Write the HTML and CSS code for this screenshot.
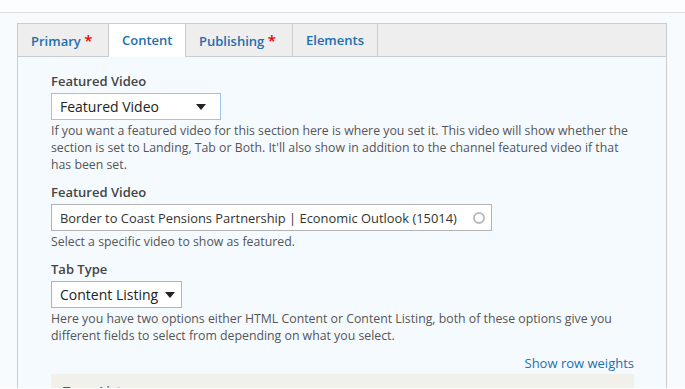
FILE: index.html
```html
<!DOCTYPE html>
<html lang="en">
<head>
  <meta charset="UTF-8" />
  <meta name="viewport" content="width=device-width, initial-scale=1.0"/>
  <title>Edit section</title>
  <link rel="stylesheet" href="styles.css">
</head>
<body>

<div class="page">
  <div class="vtabs">
    <ul class="tabs">
      <li class="tab tab-primary"><a href="#">Primary <span class="req">*</span></a></li>
      <li class="tab tab-content active"><a href="#">Content</a></li>
      <li class="tab tab-publishing"><a href="#">Publishing <span class="req">*</span></a></li>
      <li class="tab tab-elements"><a href="#">Elements</a></li>
    </ul>

    <div class="panel">
      <div class="field">
        <label for="fv">Featured Video</label>
        <div class="select focus">
          <span>Featured Video</span>
          <span class="caret"></span>
        </div>
        <div class="desc">If you want a featured video for this section here is where you set it. This video will show whether the section is set to Landing, Tab or Both. It'll also show in addition to the channel featured video if that has been set.</div>
      </div>

      <div class="field">
        <label for="fvid">Featured Video</label>
        <div class="autocomplete">
          <span class="value">Border to Coast Pensions Partnership | Economic Outlook (15014)</span>
          <span class="throbber"></span>
        </div>
        <div class="desc">Select a specific video to show as featured.</div>
      </div>

      <div class="field">
        <label for="tt">Tab Type</label>
        <div class="select small">
          <span>Content Listing</span>
          <span class="caret"></span>
        </div>
        <div class="desc">Here you have two options either HTML Content or Content Listing, both of these options give you different fields to select from depending on what you select.</div>
      </div>

      <div class="weights"><a href="#">Show row weights</a></div>

      <div class="table-head">Term List</div>
    </div>
  </div>
</div>

</body>
</html>
```

FILE: styles.css
```css
body { margin: 0; font-family: "Open Sans", "Noto Sans", sans-serif; color: #333; background: #fcfdfe; overflow: hidden; }
.page { border-top: 1px solid #e0e0e0; margin-top: 12px; padding: 10px 18px 0 17px; background: #f8fbfe; height: 376px; box-sizing: border-box; overflow: hidden; }
.vtabs { width: 650px; }
.tabs { display: flex; list-style: none; margin: 0; padding: 0; background: #eee; border: 1px solid #ccc; height: 32px; }
.tab { border-right: 1px solid #ccc; }
.tab a {
  display: block; box-sizing: border-box; height: 32px; line-height: 32px; padding: 0 0 0 13px;
  font-size: 13px; font-weight: 600; color: #1d6fae; text-decoration: none; white-space: nowrap;
}
.tab-primary a { width: 90px; }
.tab-content a { width: 76px; }
.tab-publishing a { width: 106px; }
.tab-elements a { width: 84px; }
.tab.active { background: #fff; height: 33px; }
.req { color: #e00; font-size: 15px; }
.panel { background: #f5faff; border-left: 1px solid #ccc; border-right: 1px solid #ccc; padding: 15px 32px 0 33px; height: 340px; overflow: hidden; }
.field { margin-bottom: 10px; }
label { display: block; font-size: 13px; font-weight: 600; color: #444; line-height: 18px; margin-bottom: 3px; }
.select {
  display: flex; align-items: center; justify-content: space-between; box-sizing: border-box;
  width: 170px; height: 27px; padding: 0 14px 0 8px; background: #fff; border: 1px solid #b3b3b3;
  font-size: 14px; color: #222;
}
.select.focus { border-color: #9ec3e8; }
.select.small { width: 131px; padding-right: 6px; }
.caret { width: 0; height: 0; border-left: 5px solid transparent; border-right: 5px solid transparent; border-top: 6px solid #222; }
.autocomplete {
  display: flex; align-items: center; justify-content: space-between; box-sizing: border-box;
  width: 441px; height: 27px; padding: 0 6px 0 8px; background: #fff; border: 1px solid #b3b3b3;
  font-size: 12.9px; color: #333;
}
.autocomplete .value { white-space: nowrap; }
.throbber { flex: none; width: 8px; height: 8px; border: 2px solid #bbb; border-radius: 50%; }
.desc { font-size: 12.3px; line-height: 17px; color: #555; margin-top: 2px; }
.weights { text-align: right; font-size: 13px; margin-top: 8px; }
.weights a { color: #1d6fae; text-decoration: none; }
.table-head { margin-top: 2px; background: #f1f0eb; padding: 8px 12px; font-size: 13px; font-weight: 600; color: #555; }
```
